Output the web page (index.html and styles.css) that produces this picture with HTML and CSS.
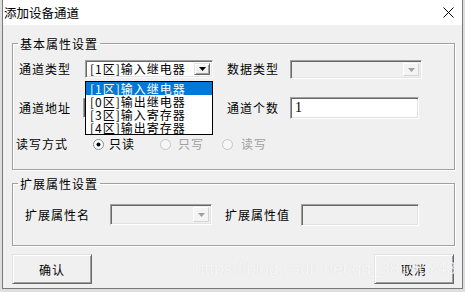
FILE: index.html
```html
<!DOCTYPE html>
<html lang="zh-CN">
<head>
<meta charset="utf-8">
<title>添加设备通道</title>
<link rel="stylesheet" href="styles.css">
</head>
<body>
<div class="dialog">
  <div class="titlebar">
    <span class="title">添加设备通道</span>
    <svg class="close" width="11" height="11" viewBox="0 0 11 11"><path d="M0.5 0.5 L10.5 10.5 M10.5 0.5 L0.5 10.5" stroke="#000" stroke-width="1"/></svg>
  </div>
  <div class="body">
    <fieldset class="group group-basic">
      <legend>基本属性设置</legend>
      <div class="row row1">
        <span class="lbl lbl-type">通道类型</span>
        <div class="combo-wrap">
          <div class="combo combo-type">
            <span class="combo-text">[1区]输入继电器</span>
            <span class="combo-btn"><svg width="7" height="4" viewBox="0 0 7 4"><path d="M0 0 H7 L3.5 4 Z" fill="#000"/></svg></span>
          </div>
          <ul class="list">
            <li class="sel">[1区]输入继电器</li>
            <li>[0区]输出继电器</li>
            <li>[3区]输入寄存器</li>
            <li>[4区]输出寄存器</li>
          </ul>
        </div>
        <span class="lbl lbl-right">数据类型</span>
        <div class="combo combo-data disabled">
          <span class="combo-text"></span>
          <span class="combo-btn"><svg width="7" height="4" viewBox="0 0 7 4"><path d="M0 0 H7 L3.5 4 Z" fill="#a0a0a0"/></svg></span>
        </div>
      </div>
      <div class="row row2">
        <span class="lbl lbl-addr">通道地址</span>
        <div class="input input-addr"></div>
        <span class="lbl lbl-right">通道个数</span>
        <div class="input input-count">1</div>
      </div>
      <div class="row row3">
        <span class="lbl lbl-rw">读写方式</span>
        <span class="radio r1"><svg width="11" height="11" viewBox="0 0 11 11"><circle cx="5.5" cy="5.5" r="5" fill="#fff" stroke="#8a8a8a"/><circle cx="5.5" cy="5.5" r="2" fill="#000"/></svg><span>只读</span></span>
        <span class="radio r2 off"><svg width="11" height="11" viewBox="0 0 11 11"><circle cx="5.5" cy="5.5" r="5" fill="#f7f7f7" stroke="#c4c4c4"/></svg><span>只写</span></span>
        <span class="radio r3 off"><svg width="11" height="11" viewBox="0 0 11 11"><circle cx="5.5" cy="5.5" r="5" fill="#f7f7f7" stroke="#c4c4c4"/></svg><span>读写</span></span>
      </div>
    </fieldset>
    <fieldset class="group group-ext">
      <legend>扩展属性设置</legend>
      <div class="row row-ext">
        <span class="lbl lbl-extname">扩展属性名</span>
        <div class="combo combo-ext disabled">
          <span class="combo-text"></span>
          <span class="combo-btn"><svg width="7" height="4" viewBox="0 0 7 4"><path d="M0 0 H7 L3.5 4 Z" fill="#a0a0a0"/></svg></span>
        </div>
        <span class="lbl lbl-extval">扩展属性值</span>
        <div class="input input-ext disabled"></div>
      </div>
    </fieldset>
    <div class="buttons">
      <button class="btn">确认</button>
      <button class="btn">取消</button>
    </div>
  </div>
  <div class="watermark">https://blog.csdn.net/qq_38196743</div>
</div>
</body>
</html>
```
FILE: styles.css
```css
* { box-sizing: border-box; }
html, body { margin: 0; padding: 0; }
body {
  width: 465px;
  height: 292px;
  overflow: hidden;
  background: #dedede;
  font-family: "Noto Sans CJK SC", "Noto Sans", sans-serif;
  font-size: 12px;
  letter-spacing: 1px;
  color: #000;
}
.dialog {
  position: relative;
  margin-left: 2px;
  width: 461px;
  height: 289px;
  border: 1px solid #7a7a7a;
  border-top: 0;
  background: #f0f0f0;
  display: flex;
  flex-direction: column;
}
.titlebar {
  height: 25px;
  background: #fff;
  display: flex;
  align-items: center;
  justify-content: space-between;
  padding: 0 8px 0 1px;
  flex: none;
}
.title { font-size: 12.5px; line-height: 15px; letter-spacing: 0; }
.close { display: block; }
.body {
  padding: 0 7px 0 9px;
  display: flex;
  flex-direction: column;
}
.group {
  margin: 11px 0 0;
  padding: 9px 0 18px 3px;
  border: 1px solid #a0a0a0;
  box-shadow: 1px 1px 0 #fff, inset 1px 1px 0 #fff;
  min-width: 0;
}
.group legend {
  padding: 0 2px;
  margin-left: 2px;
  font-size: 12px;
  line-height: 15px;
}
.group-ext { margin-top: 6px; padding: 12px 0 19px 3px; }
.row { display: flex; align-items: center; }
.row1 { height: 19px; align-items: flex-start; }
.row1 .lbl { line-height: 18px; }
.row2 { height: 22px; margin-top: 18px; }
.row3 { height: 14px; margin-top: 18px; }
.lbl { line-height: 14px; white-space: nowrap; flex: none; }
.lbl-type { width: 69px; padding-left: 3px; }
.lbl-addr { width: 67px; padding-left: 3px; }
.lbl-rw { width: 77px; }
.lbl-right { width: 63px; margin-left: 14px; }
.combo-wrap { position: relative; width: 128px; flex: none; }
.combo {
  display: flex;
  height: 18px;
  border: 1px solid;
  border-color: #a0a0a0 #fff #fff #a0a0a0;
  box-shadow: inset 1px 1px 0 #696969, inset -1px -1px 0 #e3e3e3;
  background: #fff;
  padding: 1px 2px;
  flex: none;
}
.combo.disabled { background: #f0f0f0; padding: 2px; }
.combo-text {
  flex: 1;
  line-height: 14px;
  padding-left: 2px;
  white-space: nowrap;
}
.combo-btn {
  width: 16px;
  flex: none;
  display: flex;
  align-items: center;
  justify-content: center;
  background: #f0f0f0;
  border: 1px solid;
  border-color: #e3e3e3 #696969 #696969 #e3e3e3;
  box-shadow: inset 1px 1px 0 #fff, inset -1px -1px 0 #a0a0a0;
}
.combo-type .combo-btn { margin: 1px 0; }
.combo-btn svg { display: block; }
.combo.disabled .combo-btn {
  border-color: #fff #d4d4d4 #d4d4d4 #fff;
  box-shadow: none;
  background: #f4f4f4;
}
.combo-data { width: 132px; height: 19px; }
.list {
  position: absolute;
  left: 0;
  top: 21px;
  width: 128px;
  margin: 0;
  padding: 0;
  list-style: none;
  background: #fff;
  border: 1px solid #000;
  z-index: 2;
}
.list li {
  height: 13px;
  line-height: 13px;
  padding-left: 4px;
  white-space: nowrap;
}
.list li.sel { background: #0078d7; color: #fff; }
.input {
  height: 22px;
  border: 1px solid;
  border-color: #a0a0a0 #fff #fff #a0a0a0;
  box-shadow: inset 1px 1px 0 #696969, inset -1px -1px 0 #e3e3e3;
  background: #fff;
  padding-left: 4px;
  line-height: 20px;
  flex: none;
}
.input.disabled { background: #f0f0f0; }
.input-addr { width: 130px; height: 20px; }
.input-count { width: 129px; font-family: "Liberation Serif", serif; font-size: 14px; }
.radio { display: flex; align-items: center; gap: 5px; flex: none; line-height: 14px; }
.radio svg { display: block; flex: none; }
.radio.off { color: #a0a0a0; }
.r1 { width: 67px; }
.r2 { width: 62px; gap: 7px; }
.r3 { gap: 8px; }
.row-ext { height: 23px; }
.lbl-extname { width: 94px; padding-left: 9px; }
.combo-ext { width: 102px; height: 21px; }
.lbl-extval { width: 76px; margin-left: 13px; }
.input-ext { width: 118px; }
.buttons {
  margin-top: 8px;
  padding-right: 1px;
  display: flex;
  justify-content: space-between;
}
.btn {
  width: 80px;
  height: 30px;
  background: #f0f0f0;
  border: 1px solid;
  border-color: #e3e3e3 #696969 #696969 #e3e3e3;
  box-shadow: inset 1px 1px 0 #fff, inset -1px -1px 0 #a0a0a0;
  font-family: "Noto Sans CJK SC", sans-serif;
  font-size: 12px;
  letter-spacing: 1px;
  color: #000;
  padding: 0;
}
.watermark {
  position: absolute;
  right: 6px;
  top: 259px;
  font-family: "Liberation Sans", Arial, sans-serif;
  font-size: 17px;
  letter-spacing: 0;
  line-height: 20px;
  color: rgba(255, 255, 255, 0.8);
  text-shadow: 0 0 1px rgba(0, 0, 0, 0.12);
  white-space: nowrap;
  pointer-events: none;
}
```
